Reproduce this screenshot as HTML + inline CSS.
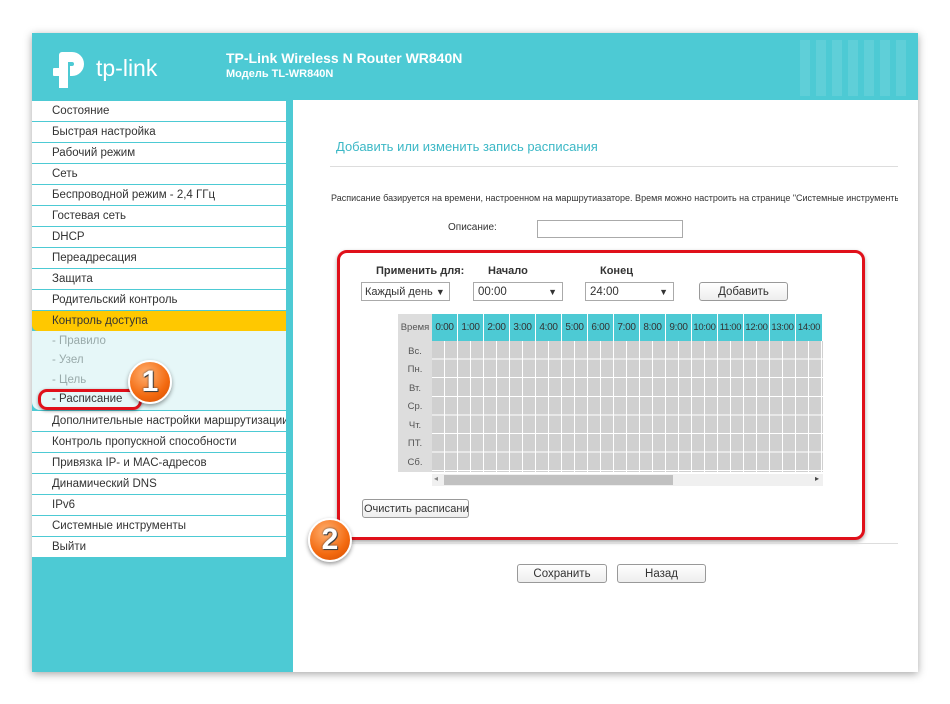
<!DOCTYPE html>
<html><head><meta charset="utf-8"><style>
*{margin:0;padding:0;box-sizing:border-box}
body{width:950px;height:704px;background:#fff;position:relative;overflow:hidden;font-family:"Liberation Sans",Arial,sans-serif;color:#333}
.a{position:absolute}
#frame{left:32px;top:33px;width:886px;height:639px;box-shadow:0 2px 8px rgba(0,0,0,.35);background:#fff}
#hdr{left:32px;top:33px;width:886px;height:67px;background:#4dcad4}
#side{left:32px;top:100px;width:261px;height:572px;background:#4dcad4}
.mi{position:absolute;left:32px;width:254px;height:20px;background:#fff;font-size:11.5px;line-height:21px;padding-left:20px;color:#333;white-space:nowrap;overflow:hidden}
.box{position:absolute;border:1px solid #aaa;background:#fff;font-size:11.5px;line-height:17px;height:19px;padding-left:4px;white-space:nowrap}
.btn{position:absolute;border:1px solid #999;border-radius:3px;background:linear-gradient(#fff,#eee);font-size:11.5px;text-align:center;line-height:18px;height:19px}
.badge{position:absolute;width:44px;height:44px;border-radius:50%;background:radial-gradient(circle at 40% 30%,#ffb070,#f36a10 60%,#d24a00);border:2px solid #fff;box-shadow:0 2px 4px rgba(0,0,0,.4);color:#fff;font-weight:bold;font-size:30px;text-align:center;line-height:40px;text-shadow:0 0 2px #333,1px 1px 0 #444}
.hc{position:absolute;top:314px;height:27px;width:26px;background:#4dcad4;border-right:1px solid #fff;font-size:10px;line-height:27px;text-align:center;color:#333;letter-spacing:-.3px;white-space:nowrap}
.dl{position:absolute;left:398px;width:34px;font-size:9.5px;color:#555;text-align:center}
</style></head><body>
<div class="a" id="frame"></div>
<div class="a" id="hdr"></div>
<svg class="a" style="left:52px;top:48px" width="44" height="40" viewBox="0 0 44 40"><path d="M10 4h10a12 12 0 0 1 0 24h-2v-10h2a2 2 0 0 0 0-4h-4v26h-9V7a3 3 0 0 1 3-3z" fill="#fff"/><rect x="1" y="20" width="7" height="8" rx="1" fill="#fff"/></svg>
<div class="a" style="left:96px;top:55px;font-size:23px;color:#fff">tp-link</div>
<div class="a" style="left:226px;top:50px;font-size:14px;font-weight:bold;color:#fff">TP-Link Wireless N Router WR840N</div>
<div class="a" style="left:226px;top:68px;font-size:11px;font-weight:bold;color:#fff">Модель TL-WR840N</div>
<div class="a" style="left:800px;top:40px;width:110px;height:56px;opacity:.1;background:repeating-linear-gradient(90deg,#fff 0 10px,transparent 10px 16px)"></div>
<div class="a" id="side"></div>
<div class="mi" style="top:101px">Состояние</div>
<div class="mi" style="top:122px">Быстрая настройка</div>
<div class="mi" style="top:143px">Рабочий режим</div>
<div class="mi" style="top:164px">Сеть</div>
<div class="mi" style="top:185px">Беспроводной режим - 2,4 ГГц</div>
<div class="mi" style="top:206px">Гостевая сеть</div>
<div class="mi" style="top:227px">DHCP</div>
<div class="mi" style="top:248px">Переадресация</div>
<div class="mi" style="top:269px">Защита</div>
<div class="mi" style="top:290px">Родительский контроль</div>
<div class="mi" style="top:311px;background:#ffc800;border-radius:0 0 0 6px">Контроль доступа</div>
<div class="a" style="left:32px;top:331px;width:254px;height:79px;background:#e6f7f8;border-radius:0 0 0 8px"></div>
<div class="a" style="left:52px;top:335px;font-size:11.5px;color:#9aa">- Правило</div>
<div class="a" style="left:52px;top:354px;font-size:11.5px;color:#9aa">- Узел</div>
<div class="a" style="left:52px;top:374px;font-size:11.5px;color:#9aa">- Цель</div>
<div class="a" style="left:52px;top:393px;font-size:11.5px;color:#333">- Расписание</div>
<div class="mi" style="top:411px">Дополнительные настройки маршрутизации</div>
<div class="mi" style="top:432px">Контроль пропускной способности</div>
<div class="mi" style="top:453px">Привязка IP- и MAC-адресов</div>
<div class="mi" style="top:474px">Динамический DNS</div>
<div class="mi" style="top:495px">IPv6</div>
<div class="mi" style="top:516px">Системные инструменты</div>
<div class="mi" style="top:537px">Выйти</div>
<div class="a" style="left:38px;top:389px;width:104px;height:21px;border:3px solid #e0101a;border-radius:9px;box-shadow:0 1px 3px rgba(0,0,0,.4)"></div>
<div class="badge" style="left:128px;top:360px">1</div>

<div class="a" style="left:336px;top:139px;font-size:13px;color:#3cb8c6">Добавить или изменить запись расписания</div>
<div class="a" style="left:330px;top:166px;width:568px;height:1px;background:#ddd"></div>
<div class="a" style="left:331px;top:193px;font-size:9px;color:#333;white-space:nowrap;width:567px;overflow:hidden">Расписание базируется на времени, настроенном на маршрутиазаторе. Время можно настроить на странице "Системные инструменты"</div>
<div class="a" style="left:448px;top:222px;font-size:10px">Описание:</div>
<div class="box" style="left:537px;top:220px;width:146px;height:18px"></div>

<div class="a" style="left:337px;top:250px;width:528px;height:290px;border:3px solid #e0101a;border-radius:10px;box-shadow:0 2px 4px rgba(0,0,0,.35)"></div>
<div class="a" style="left:376px;top:265px;font-size:11px;font-weight:bold">Применить для:</div>
<div class="a" style="left:488px;top:265px;font-size:11px;font-weight:bold">Начало</div>
<div class="a" style="left:600px;top:265px;font-size:11px;font-weight:bold">Конец</div>
<div class="box" style="left:361px;top:282px;width:89px;font-size:11px;padding-left:3px;line-height:18px">Каждый день <span style="font-size:9px">▼</span></div>
<div class="box" style="left:473px;top:282px;width:90px;line-height:18px">00:00<span style="position:absolute;right:5px;font-size:9px">▼</span></div>
<div class="box" style="left:585px;top:282px;width:89px;line-height:18px">24:00<span style="position:absolute;right:5px;font-size:9px">▼</span></div>
<div class="btn" style="left:699px;top:282px;width:89px">Добавить</div>

<div class="a" style="left:398px;top:314px;width:34px;height:158px;background:#ddd"></div>
<div class="dl" style="top:322px">Время</div>
<div class="dl" style="top:346px">Вс.</div>
<div class="dl" style="top:364px">Пн.</div>
<div class="dl" style="top:383px">Вт.</div>
<div class="dl" style="top:401px">Ср.</div>
<div class="dl" style="top:420px">Чт.</div>
<div class="dl" style="top:438px">ПТ.</div>
<div class="dl" style="top:457px">Сб.</div>
<div class="hc" style="left:432px">0:00</div><div class="hc" style="left:458px">1:00</div><div class="hc" style="left:484px">2:00</div><div class="hc" style="left:510px">3:00</div><div class="hc" style="left:536px">4:00</div><div class="hc" style="left:562px">5:00</div><div class="hc" style="left:588px">6:00</div><div class="hc" style="left:614px">7:00</div><div class="hc" style="left:640px">8:00</div><div class="hc" style="left:666px">9:00</div><div class="hc" style="left:692px;font-size:9.5px">10:00</div><div class="hc" style="left:718px;font-size:9.5px">11:00</div><div class="hc" style="left:744px;font-size:9.5px">12:00</div><div class="hc" style="left:770px;font-size:9.5px">13:00</div><div class="hc" style="left:796px;width:27px;font-size:9.5px">14:00</div>
<div class="a" style="left:432px;top:341px;width:391px;height:131px;background:repeating-linear-gradient(to bottom,transparent 0 17.6px,#fff 17.6px 18.6px),repeating-linear-gradient(to right,#d0d0d0 0 12px,#fff 12px 13px)"></div>
<div class="a" style="left:432px;top:474px;width:391px;height:12px;background:#f0f0f0"></div>
<div class="a" style="left:444px;top:475px;width:229px;height:10px;background:#c1c1c1"></div>
<div class="a" style="left:434px;top:474px;font-size:8px;color:#888">◂</div>
<div class="a" style="left:815px;top:474px;font-size:8px;color:#444">▸</div>
<div class="btn" style="left:362px;top:499px;width:107px;overflow:hidden;text-align:left;padding-left:1px;white-space:nowrap;font-size:11px">Очистить расписание</div>
<div class="a" style="left:330px;top:543px;width:568px;height:1px;background:#ddd"></div>
<div class="badge" style="left:308px;top:518px">2</div>
<div class="btn" style="left:517px;top:564px;width:90px">Сохранить</div>
<div class="btn" style="left:617px;top:564px;width:89px">Назад</div>
</body></html>
